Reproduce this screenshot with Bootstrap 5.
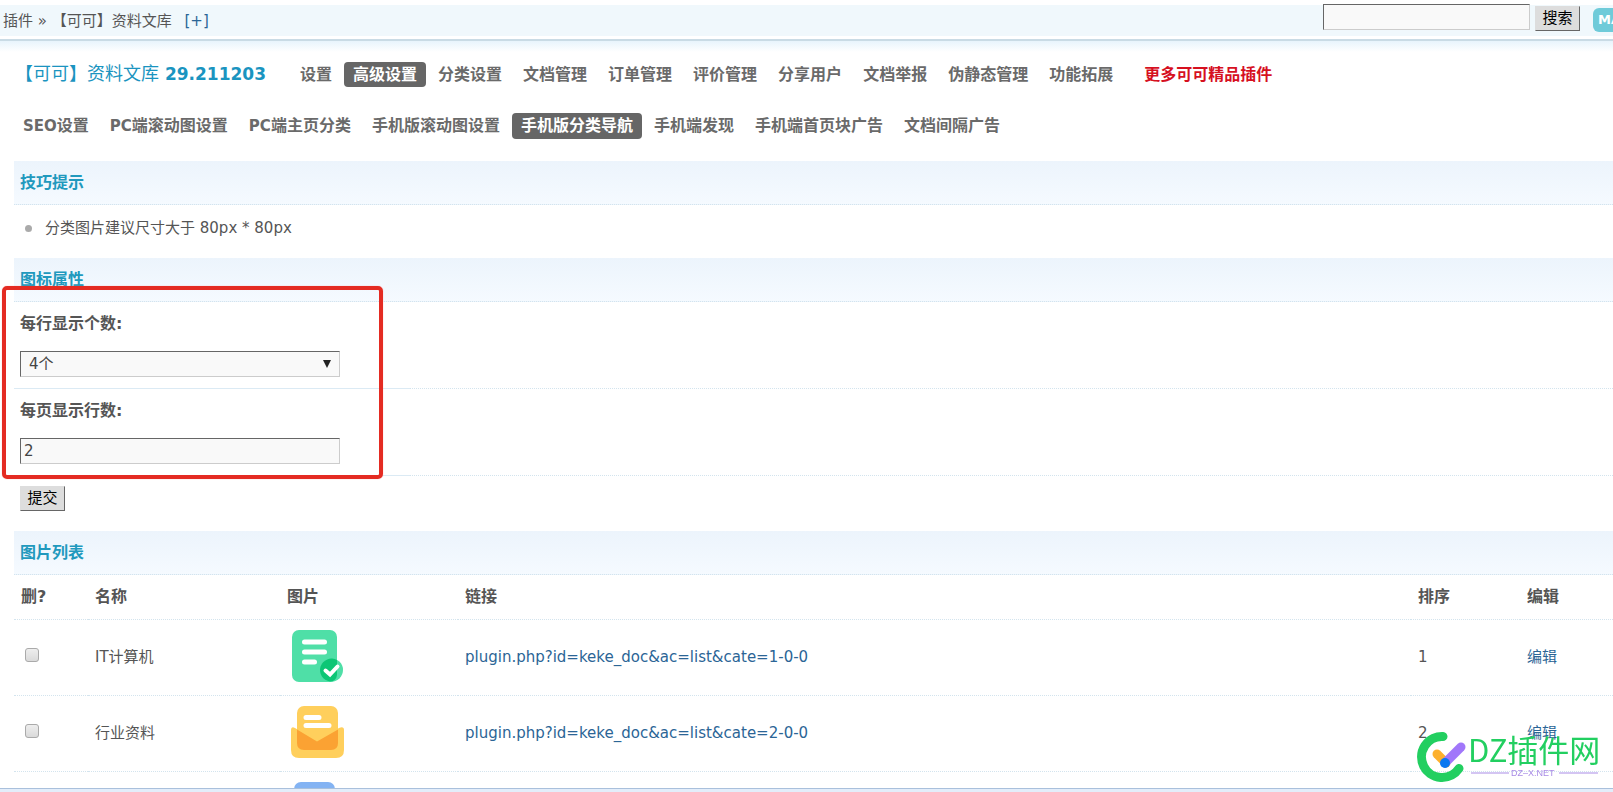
<!DOCTYPE html>
<html lang="zh-CN">
<head>
<meta charset="utf-8">
<meta name="viewport" content="width=device-width, initial-scale=1">
<title>【可可】资料文库</title>
<link href="https://cdn.jsdelivr.net/npm/bootstrap@5.3.0/dist/css/bootstrap.min.css" rel="stylesheet">
<style>
body{height:100vh;overflow:hidden;background:#fff;color:#555;font:15px/24px "DejaVu Sans","Noto Sans CJK SC",sans-serif}
a{color:#2b6596;text-decoration:none}
.topbar{margin-top:5px;height:31px;background:#f0f8fc}
.crumbs{padding:4px 0 0 3px}
.topline{margin-top:3px;height:13px;border-top:2px solid #c9dbe5;background:linear-gradient(#e8f4fc,#fff)}
.old-input{height:26px;border:1px solid;border-color:#666 #ccc #ccc #666;border-radius:0;background:#f9f9f9;color:#444;padding:0 3px;font-size:15px;line-height:24px}
.search-form{margin-top:-1px;gap:5px}
.search-box{width:207px}
.old-btn{height:25px;width:45px;border:1px solid;border-color:#ddd #666 #666 #ddd;border-radius:0;background:#ddd;color:#000;padding:0;font-size:15px;line-height:21px}
.search-form .old-btn{margin-top:2px}
.submit-btn{display:block;margin:10px 6px 20px}
.map-btn{width:42px;height:24px;margin:3px -22px 0 13px;border-radius:6px;background:#6fcbd9;color:#fff;font-weight:700;font-size:13px;padding-left:5px;line-height:24px}
.title-row{padding:9px 0 0 15px}
.plugin-title{color:#1a94c0;font-size:17px;font-weight:700;margin:0 25px 0 0;line-height:25px;white-space:nowrap}
.plugin-title span{font-size:18px;font-weight:400}
.tabs{display:flex;gap:3px;font-size:16px;font-weight:700;line-height:25px;white-space:nowrap}
.tabs a{color:#6a6a6a;padding:0 9px;border-radius:4px}
.tabs a.active{background:#666;color:#fff}
.tabs a.hot{color:#d6101f;margin-left:10px}
.tabs .lat{font-size:15px}
.sub-tabs{padding:26px 0 22px 14px}
.page-body{margin-left:14px}
.section-head{margin:0;height:44px;padding:0 6px;border-bottom:1px dotted #d3e4ee;background:linear-gradient(#ecf4fc,#f5faff);color:#2199bd;font-size:16px;font-weight:700;line-height:44px}
.tip-list{list-style:none;height:53px;margin:0;padding:11px 11px}
.tip-list li{display:flex;align-items:center;gap:13px}
.tip-list li::before{content:"";width:7px;height:7px;border-radius:50%;background:#aaa}
.field-row{height:87px;border-bottom:1px dotted #d3e4ee}
.field-cell{width:396px;height:87px;padding:9px 6px 0;border-bottom:1px solid #dbeaf4}
.field-cell label{display:block;font-size:16px;font-weight:700;line-height:26px;margin-bottom:14px}
.field-cell .old-input{width:320px;display:block}
select.old-input{appearance:none;padding-left:8px;background:#f9f9f9 url("data:image/svg+xml,%3Csvg xmlns='http://www.w3.org/2000/svg' width='8' height='8'%3E%3Cpath d='M0 0h8L4 8z' fill='%23222'/%3E%3C/svg%3E") no-repeat right 8px center}
.mark-frame{position:absolute;left:-12px;top:28px;width:381px;height:193px;border:4px solid #e42b22;border-radius:5px;box-shadow:0 0 1px #f88;pointer-events:none}
.pics{width:100%;table-layout:fixed;border-collapse:collapse}
.pics th{height:44px;font-size:16px;padding:0 6px 0 7px}
.pics td{height:76px;padding:0 7px}
.pics tr{border-bottom:1px dotted #d3e4ee}
.c-del{width:74px}.c-name{width:192px}.c-pic{width:178px}.c-order{width:109px}.c-edit{width:93px}
.pics svg{display:block}
.pics input{appearance:none;display:block;width:14px;height:14px;margin:0 0 4px 4px;border:1px solid #aaa;border-radius:3px;background:linear-gradient(#eee,#dadada)}
.status-strip{position:fixed;left:0;right:0;bottom:0;height:4px;background:#e3edfa;border-top:1px solid #a9c0dc}
.site-mark{position:fixed;right:12px;bottom:10px;width:184px;height:53px}
</style>
</head>
<body>
<header>
  <div class="topbar d-flex">
    <div class="crumbs d-flex"><span>插件 » 【可可】资料文库</span><a href="#" class="ms-2">&nbsp;[+]</a></div>
    <form class="search-form d-flex ms-auto">
      <input class="old-input search-box" type="text" aria-label="搜索">
      <button class="old-btn" type="button">搜索</button>
    </form>
    <a class="map-btn" href="#">MAP</a>
  </div>
  <div class="topline"></div>
</header>
<main>
  <div class="title-row d-flex align-items-center">
    <h1 class="plugin-title"><span>【可可】资料文库</span> 29.211203</h1>
    <nav class="tabs"><a href="#">设置</a><a href="#" class="active">高级设置</a><a href="#">分类设置</a><a href="#">文档管理</a><a href="#">订单管理</a><a href="#">评价管理</a><a href="#">分享用户</a><a href="#">文档举报</a><a href="#">伪静态管理</a><a href="#">功能拓展</a><a href="#" class="hot">更多可可精品插件</a></nav>
  </div>
  <nav class="tabs sub-tabs"><a href="#"><span class="lat">SEO</span>设置</a><a href="#"><span class="lat">PC</span>端滚动图设置</a><a href="#"><span class="lat">PC</span>端主页分类</a><a href="#">手机版滚动图设置</a><a href="#" class="active">手机版分类导航</a><a href="#">手机端发现</a><a href="#">手机端首页块广告</a><a href="#">文档间隔广告</a></nav>
  <div class="page-body">
    <section>
      <h2 class="section-head">技巧提示</h2>
      <ul class="tip-list"><li>分类图片建议尺寸大于 80px * 80px</li></ul>
    </section>
    <section class="position-relative">
      <h2 class="section-head">图标属性</h2>
      <form>
        <div class="field-row"><div class="field-cell"><label for="cols">每行显示个数:</label><select id="cols" class="old-input"><option>4个</option></select></div></div>
        <div class="field-row"><div class="field-cell"><label for="rows">每页显示行数:</label><input id="rows" class="old-input" type="text" value="2"></div></div>
        <button class="old-btn submit-btn" type="button">提交</button>
      </form>
      <div class="mark-frame"></div>
    </section>
    <section>
      <h2 class="section-head">图片列表</h2>
      <table class="pics">
        <colgroup><col class="c-del"><col class="c-name"><col class="c-pic"><col><col class="c-order"><col class="c-edit"></colgroup>
        <thead><tr><th>删?</th><th>名称</th><th>图片</th><th>链接</th><th>排序</th><th>编辑</th></tr></thead>
        <tbody>
          <tr><td><input type="checkbox" aria-label="删除 IT计算机"></td><td>IT计算机</td><td>
            <svg width="60" height="60" viewBox="0 0 60 60"><rect x="5" y="3" width="45" height="52" rx="7" fill="#4fdfa7"/><circle cx="44.500" cy="43" r="11.500" fill="#4fdfa7"/><path d="M50 33v15a7 7 0 0 1-7 6.500A11.500 11.500 0 1 1 50 33z" fill="#0cc675"/><path d="M17.500 15h20M17.500 25h20M17.500 35h10" stroke="#fff" stroke-width="5" stroke-linecap="round"/><path d="M38.500 43.500l4.500 4 7.500-8" fill="none" stroke="#fff" stroke-width="4" stroke-linecap="round"/></svg>
          </td><td><a href="#">plugin.php?id=keke_doc&amp;ac=list&amp;cate=1-0-0</a></td><td>1</td><td><a href="#">编辑</a></td></tr>
          <tr><td><input type="checkbox" aria-label="删除 行业资料"></td><td>行业资料</td><td>
            <svg width="60" height="60" viewBox="0 0 60 60"><rect x="10" y="3" width="41" height="44" rx="7" fill="#ffcf5c"/><path d="M4 27q0-4 4-2l22 13 22-13q5-2 5 2v20q0 8-8 8H12q-8 0-8-8z" fill="#ffcf5c"/><path d="M10 26.500L30 38.500 51 26.500V40q0 7-7 7H17q-7 0-7-7z" fill="#fba233"/><path d="M19 14.500h13M19 22.500h23" stroke="#fff" stroke-width="5" stroke-linecap="round"/></svg>
          </td><td><a href="#">plugin.php?id=keke_doc&amp;ac=list&amp;cate=2-0-0</a></td><td>2</td><td><a href="#">编辑</a></td></tr>
          <tr><td></td><td></td><td>
            <svg width="60" height="60" viewBox="0 0 60 60"><rect x="7" y="3" width="41" height="50" rx="7" fill="#83b3f3"/></svg>
          </td><td></td><td></td><td></td></tr>
        </tbody>
      </table>
    </section>
  </div>
</main>
<div class="status-strip"></div>
<svg class="site-mark" viewBox="0 0 184 53">
  <path d="M26 7.500A20.500 20.500 0 1 0 42 39.500" fill="none" stroke="#22cf60" stroke-width="9" stroke-linecap="round"/>
  <path d="M20 25l9 9" stroke="#fdb02d" stroke-width="9" stroke-linecap="round"/>
  <path d="M28 34l16-16" stroke="#a177fa" stroke-width="9" stroke-linecap="round"/>
  <circle cx="28" cy="34" r="5" fill="#0b78f0"/>
  <text x="51" y="33" font-family="Noto Sans CJK SC, sans-serif" font-size="31" fill="#22cf60">DZ插件网</text>
  <path d="M54 44h38M142 44h39" stroke="#a98be6"/>
  <text x="94" y="47" font-family="Liberation Sans, sans-serif" font-size="9" fill="#a98be6">DZ–X.NET</text>
</svg>
<script src="https://cdn.jsdelivr.net/npm/bootstrap@5.3.0/dist/js/bootstrap.bundle.min.js"></script>
</body>
</html>
